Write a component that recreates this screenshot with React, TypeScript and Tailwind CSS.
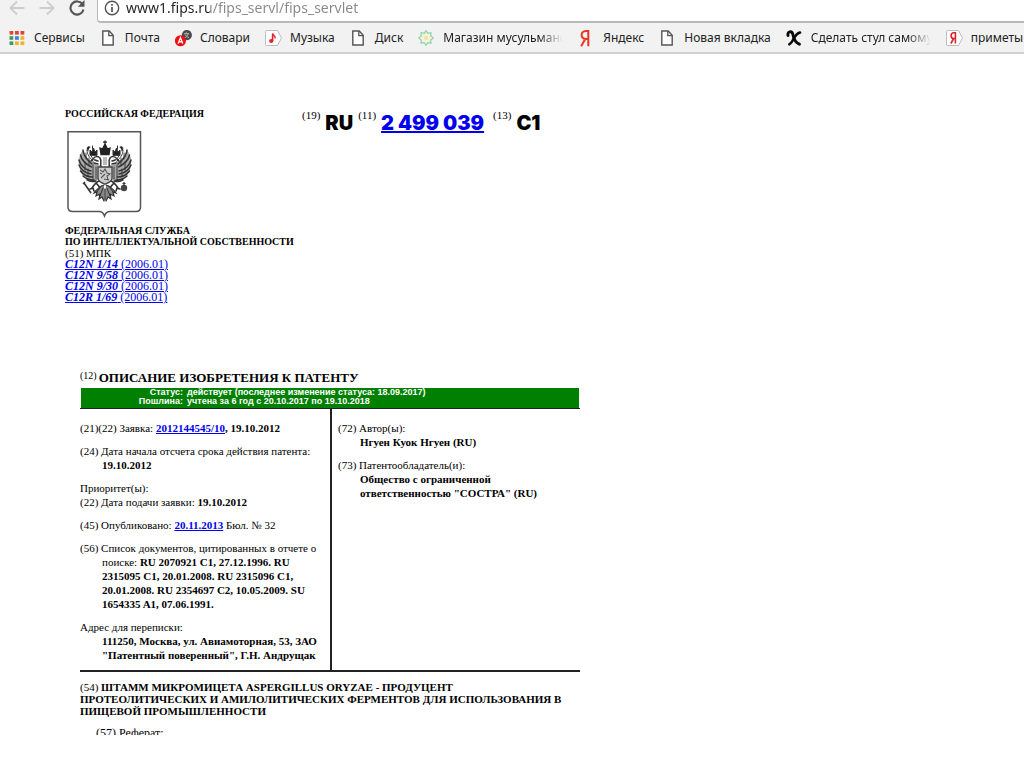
import type { ReactNode } from "react";
import { clsx } from "clsx";

type IconProps = { className?: string };

function AppsIcon() {
  const colors = [
    "#e0453a", "#e0453a", "#e0453a",
    "#3f9b5b", "#3f7fe0", "#f0b429",
    "#3f9b5b", "#f0b429", "#f0b429",
  ];
  return (
    <svg viewBox="0 0 16 16" className="size-4 shrink-0" aria-hidden="true">
      {colors.map((fill, i) => (
        <rect key={i} x={0.5 + (i % 3) * 5.5} y={1 + Math.floor(i / 3) * 5.2} width="3.8" height="3.6" fill={fill} />
      ))}
    </svg>
  );
}

function PageIcon() {
  return (
    <svg viewBox="0 0 16 16" className="size-4 shrink-0" aria-hidden="true">
      <path d="M2.8 1h6.4l4 4.2V15H2.8z" fill="#fff" stroke="#555" strokeWidth="1.4" />
      <path d="M8.8 1v4.6h4.4" fill="none" stroke="#555" strokeWidth="1.3" />
    </svg>
  );
}

function DictionaryIcon() {
  return (
    <svg viewBox="0 0 17 17" className="size-4 shrink-0 overflow-visible" aria-hidden="true">
      <circle cx="12.6" cy="5.4" r="5.4" fill="#4a4a4a" />
      <path d="M9.5 4h5.5M12 2.4V4m2 0c-.8 2.4-2.3 3.6-4 4.4M11 5c.8 1.6 2 2.600 3.800 3.200" stroke="#bbb" fill="none" />
      <circle cx="5.8" cy="11.4" r="5.900" fill="#ee1111" />
      <path d="M3.3 14.400 5.800 8.200l2.500 6.200M4.200 12.500h3.200" fill="none" stroke="#fff" strokeWidth="1.4" />
    </svg>
  );
}

function TagIcon({ children }: { children: ReactNode }) {
  return (
    <svg viewBox="0 0 16 16" className="size-4 shrink-0 overflow-visible" aria-hidden="true">
      <path d="M1.500.5h11l4 7.500-4 7.500h-11a1 1 0 0 1-1-1v-13a1 1 0 0 1 1-1z" fill="#fff" stroke="#bdbdbd" />
      {children}
    </svg>
  );
}

function MusicIcon() {
  return (
    <TagIcon>
      <circle cx="6.200" cy="11" r="2.100" fill="#e8202a" />
      <path d="M7.600 11V3.400c.4 2.400 2.900 2 2.600 5" fill="none" stroke="#e8202a" strokeWidth="1.600" />
    </TagIcon>
  );
}

function YandexTagIcon() {
  return (
    <TagIcon>
      <path d="M9.400 13.500V2.800H7.800C4.200 2.800 4.200 8.500 7.800 8.500h1.600M7.600 8.500l-2.700 5" fill="none" stroke="#d8242a" strokeWidth="1.600" />
    </TagIcon>
  );
}

function YandexIcon() {
  return (
    <svg viewBox="0 0 16 16" className="size-4 shrink-0 overflow-visible" aria-hidden="true">
      <path d="M10.300 16.300V.9H7.900C2.200.9 2.200 9 7.900 9h2.400M7.300 9l-4.200 7.300" fill="none" stroke="#ee3524" strokeWidth="2" />
    </svg>
  );
}

function StarIcon() {
  return (
    <svg viewBox="0 0 16 16" className="size-4 shrink-0" aria-hidden="true">
      <path
        d="m8 .8 1.800 2.400 3.100-.5-.2 3L15.400 8l-2.700 2.100.2 3.100-3.100-.5L8 15.200l-1.800-2.500-3.100.5.2-3.100L.6 8l2.700-2.300-.2-3 3.100.5z"
        fill="#f7f3d8"
        stroke="#8fd6b0"
        strokeWidth="1.300"
      />
      <circle cx="8" cy="8" r="2" fill="#f6dfa8" />
    </svg>
  );
}

function CraftIcon() {
  return (
    <svg viewBox="0 0 16 16" className="size-4 shrink-0" aria-hidden="true">
      <g fill="none" stroke="#0b0b0b" strokeLinecap="round">
        <path d="M2 5.500C1.200 1 6 .6 6.800 4.200c.8 4 2.200 8.300 6.600 10" strokeWidth="2.900" />
        <path d="M14 2.600C9.800 3.800 8.600 7.200 7 10c-.8 1.600-1.800 3-3.600 4.300" strokeWidth="2.600" />
      </g>
    </svg>
  );
}

function BackIcon({ className }: IconProps) {
  return (
    <svg viewBox="0 0 16 16" className={clsx("size-4 shrink-0", className)} aria-hidden="true">
      <path d="M15.500 8H1.800M8 1.500 1.500 8 8 14.500" fill="none" stroke="currentColor" strokeWidth="1.900" />
    </svg>
  );
}

function ReloadIcon() {
  return (
    <svg viewBox="0 0 16 16" className="size-4 shrink-0" aria-hidden="true">
      <path d="M13.700 4.500A6.600 6.600 0 1 0 14.500 9.600" fill="none" stroke="#555" strokeWidth="2.100" />
      <path d="M15.500 0v6.800H8.800z" fill="#555" />
    </svg>
  );
}

function InfoIcon() {
  return (
    <svg viewBox="0 0 16 16" className="size-4 shrink-0" aria-hidden="true">
      <circle cx="8" cy="8" r="6.700" fill="none" stroke="#555" strokeWidth="1.400" />
      <path d="M8 7v5M8 4v1.700" stroke="#555" strokeWidth="1.700" />
    </svg>
  );
}

type Bookmark = { label: string; icon: ReactNode; faded?: boolean };

const BOOKMARKS: Bookmark[] = [
  { label: "Сервисы", icon: <AppsIcon /> },
  { label: "Почта", icon: <PageIcon /> },
  { label: "Словари", icon: <DictionaryIcon /> },
  { label: "Музыка", icon: <MusicIcon /> },
  { label: "Диск", icon: <PageIcon /> },
  { label: "Магазин мусульманс", icon: <StarIcon />, faded: true },
  { label: "Яндекс", icon: <YandexIcon /> },
  { label: "Новая вкладка", icon: <PageIcon /> },
  { label: "Сделать стул самому", icon: <CraftIcon />, faded: true },
  { label: "приметы", icon: <YandexTagIcon /> },
];

function BrowserChrome() {
  return (
    <header className="bg-[#f2f2f2] font-['Noto_Sans','Open_Sans',sans-serif]">
      <div className="flex h-[23px] items-stretch overflow-hidden">
        <div className="flex h-4 w-[97px] shrink-0 items-center gap-3.5 pl-[9px]">
          <button type="button" aria-label="Назад" className="text-[#cdcdcd]">
            <BackIcon />
          </button>
          <button type="button" aria-label="Вперёд" className="text-[#cdcdcd]">
            <BackIcon className="rotate-180" />
          </button>
          <button type="button" aria-label="Обновить">
            <ReloadIcon />
          </button>
        </div>
        <div className="flex flex-1 rounded-bl-sm border-b-2 border-l border-[#b8b8b8] bg-white">
          <div className="flex h-4 flex-1 items-center gap-1.5 pl-1.5">
            <InfoIcon />
            <input
              type="text"
              aria-label="Адресная строка"
              defaultValue="www1.fips.ru/fips_servl/fips_servlet"
              className="h-5 min-w-0 flex-1 bg-[linear-gradient(to_right,#222_84px,#888_84px)] bg-clip-text text-sm text-transparent outline-none"
            />
          </div>
        </div>
      </div>
      <nav aria-label="Панель закладок" className="flex h-[31px] items-center gap-[15px] overflow-hidden border-b-2 border-[#d0d0d0] pl-[9px]">
        {BOOKMARKS.map((item) => (
          <a key={item.label} href="#" className="flex shrink-0 items-center gap-[9px] text-xs text-[#222]">
            {item.icon}
            <span
              className={clsx(
                "whitespace-nowrap",
                item.faded && "w-[120px] mask-r-from-80% mask-r-to-100%",
              )}
            >
              {item.label}
            </span>
          </a>
        ))}
      </nav>
    </header>
  );
}

// One half of the eagle; mirrored around x = 37.
function EagleHalf() {
  return (
    <g fill="none" stroke="#333" strokeLinecap="round">
      <path d="M33 34C27 35 25 30 25 27c-1 4-4 3-7-2-1-3-2-5-3-6-3 4-5 9-4 15 1 8 5 13 12 17l9-3z" fill="#aaa" stroke="none" />
      <path d="M15 19c0 5 3 9 9 14M12.500 24c1 5 5 9 11 12M11 29c1 5 6 10 12 11M11 34c2 5 6 8 12 9M12.500 40c3 4 6 6 12 6M15 45c3 3 6 4 11 4M19 49c3 2 5 2 9 1" strokeWidth="1.500" />
      <path d="M19 19c0 5 3 8 6 11M22 22c1 4 3 6 6 8M18 22v6M21 27v8M17 31v8M20 38v7M25 34v14M28 36v12" strokeWidth="0.900" />
      <path d="M33 36c-1-4 1-6-1-9-2-2-5-2-7 1l-2 2M27 29l3 1M30 33l-4-1" strokeWidth="1.500" />
      <path d="M22 24v-5l2 2 1.500-4 1.500 4 2-2v5zM24.500 15v3M20 20c-2-4 0-5 2-4" fill="#222" strokeWidth="1" />
      <path d="M31 50c-3 1-5 4-7 7M29 53l4 5M25 57l-3 1m3-1 1 3" strokeWidth="1.600" />
      <path d="M36 54c-4 1-7 4-10 8l3-1-1 4 4-2-1 5 3-2 2 4" fill="#888" strokeWidth="1.200" />
      <path d="M35 57l-3 8M37 58v11M33 55l-4 6" strokeWidth="1" />
    </g>
  );
}

function CoatOfArms() {
  return (
    <svg viewBox="0 0 76 88" className="h-[88px] w-[76px]" role="img" aria-label="Герб Российской Федерации">
      <path d="M1 .8h72.500V76q0 4.500-4.500 4.500H43q-4 0-5.500 4.500-1.500-4.500-5.500-4.500H5.500Q1 80.500 1 76z" fill="#fff" stroke="#555" strokeWidth="1.500" />
      <g transform="translate(1 0)">
        <EagleHalf />
        <g transform="matrix(-1 0 0 1 74 0)">
          <EagleHalf />
        </g>
        <path d="M33 23.500l-1-6.500 2.500 1 2.500-5 2.500 5 2.500-1-1 6.500zM37 9.500v4M35 11.200h4" fill="#222" stroke="#222" strokeWidth="1.300" />
        <path d="M35 26h4v8h-4z" fill="#bbb" />
        <path d="M30 36h14v11q0 4-7 6-7-2-7-6z" fill="#ccc" stroke="#444" strokeWidth="1.300" />
        <path d="m32 39 3 2 2-3 2 4 3 1-3 2 1 4m-3-6-4 4m1-4-2-1M36 48l5 1" fill="none" stroke="#555" strokeWidth="1.100" />
        <path d="m16 52 7 10M15 53l2-2" stroke="#333" strokeWidth="1.600" />
        <circle cx="56" cy="57" r="3.200" fill="#444" />
        <path d="M56 51v4M54.500 52.500h3" stroke="#333" strokeWidth="1.200" />
      </g>
    </svg>
  );
}

const MPK_CODES = ["C12N 1/14", "C12N 9/58", "C12N 9/30", "C12R 1/69"];

function DocLink({ children }: { children: ReactNode }) {
  return (
    <a href="#" className="text-[#0000ee] underline">
      {children}
    </a>
  );
}

// Small INID code that precedes a part of the document number.
function InidCode({ children }: { children: ReactNode }) {
  return <span className="font-['Liberation_Serif',serif] text-[11px] leading-[14px] font-normal">{children}</span>;
}

function OfficeHeader() {
  return (
    <div className="flex">
      <div className="w-[237px] shrink-0 text-[10px] leading-[11px]">
        <p className="whitespace-nowrap font-bold">РОССИЙСКАЯ ФЕДЕРАЦИЯ</p>
        <div className="pt-3 pb-1.5 pl-0.5">
          <CoatOfArms />
        </div>
        <p className="whitespace-nowrap font-bold">
          ФЕДЕРАЛЬНАЯ СЛУЖБА
          <br />
          ПО ИНТЕЛЛЕКТУАЛЬНОЙ СОБСТВЕННОСТИ
        </p>
        <p className="text-[11px] leading-3">(51) МПК</p>
        <ul className="text-xs leading-[11px]">
          {MPK_CODES.map((code) => (
            <li key={code}>
              <DocLink>
                <b>
                  <i>{code}</i>
                </b>{" "}
                (2006.01)
              </DocLink>
            </li>
          ))}
        </ul>
      </div>
      <h1 className="flex items-start gap-[5px] font-['Inter','Liberation_Sans',sans-serif] text-xl leading-[30px] font-black">
        <InidCode>(19)</InidCode>
        <span>RU</span>
        <InidCode>(11)</InidCode>
        <span className="pr-1">
          <DocLink>2 499 039</DocLink>
        </span>
        <InidCode>(13)</InidCode>
        <span>C1</span>
      </h1>
    </div>
  );
}

function Entry({ children }: { children: ReactNode }) {
  return <p className="pl-[22px] -indent-[22px]">{children}</p>;
}

function PatentDescription() {
  return (
    <section className="w-[500px]">
      <h2 className="flex h-[18px] items-start gap-0.5 text-[13px] leading-4 font-bold">
        <span className="text-[10px] leading-3 font-normal">(12)</span>
        ОПИСАНИЕ ИЗОБРЕТЕНИЯ К ПАТЕНТУ
      </h2>
      <div className="mx-px grid h-5 grid-cols-[62px_1fr] content-start gap-x-1 bg-[#008000] pl-10 font-['Liberation_Sans',sans-serif] text-[9px] leading-[9px] font-bold text-white">
        <span className="text-right">Статус:</span>
        <span>действует (последнее изменение статуса: 18.09.2017)</span>
        <span className="text-right">Пошлина:</span>
        <span>учтена за 6 год с 20.10.2017 по 19.10.2018</span>
      </div>
      <div className="grid grid-cols-[252px_1fr] border-t border-b-2 border-[#222] text-[11px] leading-[14px]">
        <div className="flex flex-col gap-[9px] border-r-2 border-[#222] pt-3 pb-2">
          <Entry>
            (21)(22) Заявка: <b><DocLink>2012144545/10</DocLink>, 19.10.2012</b>
          </Entry>
          <Entry>
            (24) Дата начала отсчета срока действия патента:
            <br />
            <b>19.10.2012</b>
          </Entry>
          <Entry>
            Приоритет(ы):
            <br />
            <span className="-ml-[22px]">
              (22) Дата подачи заявки: <b>19.10.2012</b>
            </span>
          </Entry>
          <Entry>
            (45) Опубликовано: <b><DocLink>20.11.2013</DocLink></b> Бюл. № 32
          </Entry>
          <Entry>
            (56) Список документов, цитированных в отчете о
            <br />
            поиске: <b>RU 2070921 C1, 27.12.1996. RU</b>
            <br />
            <b>
              2315095 C1, 20.01.2008. RU 2315096 C1,
              <br />
              20.01.2008. RU 2354697 C2, 10.05.2009. SU
              <br />
              1654335 A1, 07.06.1991.
            </b>
          </Entry>
          <Entry>
            Адрес для переписки:
            <br />
            <b>
              111250, Москва, ул. Авиамоторная, 53, ЗАО
              <br />
              "Патентный поверенный", Г.Н. Андрущак
            </b>
          </Entry>
        </div>
        <div className="flex flex-col gap-[9px] pt-3 pl-1.5">
          <Entry>
            (72) Автор(ы):
            <br />
            <b>Нгуен Куок Нгуен (RU)</b>
          </Entry>
          <Entry>
            (73) Патентообладатель(и):
            <br />
            <b>
              Общество с ограниченной
              <br />
              ответственностью "СОСТРА" (RU)
            </b>
          </Entry>
        </div>
      </div>
      <p className="pt-[9px] text-[11px] leading-3">
        (54){" "}
        <b>
          ШТАММ МИКРОМИЦЕТА ASPERGILLUS ORYZAE - ПРОДУЦЕНТ
          <br />
          ПРОТЕОЛИТИЧЕСКИХ И АМИЛОЛИТИЧЕСКИХ ФЕРМЕНТОВ ДЛЯ ИСПОЛЬЗОВАНИЯ В
          <br />
          ПИЩЕВОЙ ПРОМЫШЛЕННОСТИ
        </b>
      </p>
      <div className="mt-[9px] h-[9px] overflow-hidden pl-4 text-xs leading-[14px]">(57) Реферат:</div>
    </section>
  );
}

export default function App() {
  return (
    <div className="min-h-screen bg-white text-black">
      <BrowserChrome />
      <main className="px-[65px] pt-[54px] pb-8 font-['Liberation_Serif',serif]">
        <OfficeHeader />
        <div className="pt-[67px] pl-[15px]">
          <PatentDescription />
        </div>
      </main>
    </div>
  );
}
